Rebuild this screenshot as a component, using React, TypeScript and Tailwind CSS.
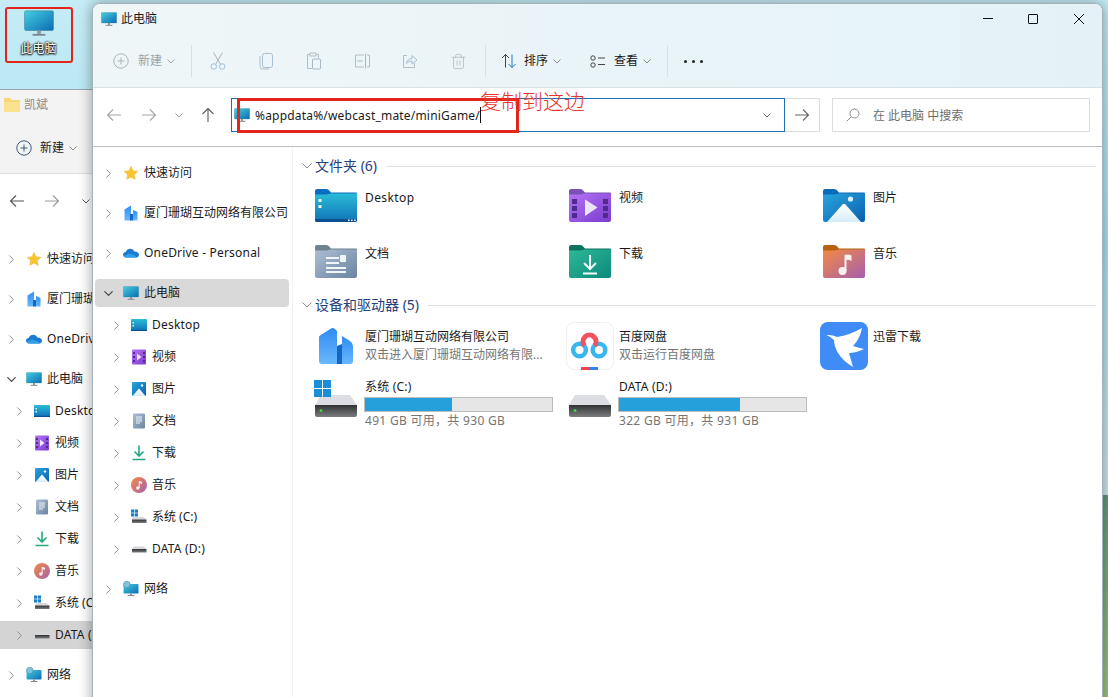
import React from "react";
import { Trash2, ChevronDown, ChevronRight } from "lucide-react";

const Defs = () => (
  <svg className="absolute w-0 h-0" aria-hidden="true">
    <defs>
      <linearGradient id="gMon" x1="0" y1="0" x2="1" y2="1"><stop offset="0" stopColor="#45cfe0" /><stop offset="1" stopColor="#0b6cb4" /></linearGradient>
      <linearGradient id="gDesk" x1="0" y1="0" x2="0" y2="1"><stop offset="0" stopColor="#2bbcd8" /><stop offset="1" stopColor="#0f72b6" /></linearGradient>
      <linearGradient id="gVid" x1="0" y1="0" x2="1" y2="1"><stop offset="0" stopColor="#b573f6" /><stop offset="1" stopColor="#7a3ccf" /></linearGradient>
      <linearGradient id="gPic" x1="0" y1="0" x2="1" y2="1"><stop offset="0" stopColor="#2aa6de" /><stop offset="1" stopColor="#0a5fae" /></linearGradient>
      <linearGradient id="gDoc" x1="0" y1="0" x2="1" y2="1"><stop offset="0" stopColor="#acbed4" /><stop offset="1" stopColor="#6b84a0" /></linearGradient>
      <linearGradient id="gDl" x1="0" y1="0" x2="1" y2="1"><stop offset="0" stopColor="#2fb996" /><stop offset="1" stopColor="#0b8a7c" /></linearGradient>
      <linearGradient id="gMus" x1="0" y1="0" x2="1" y2="1"><stop offset="0" stopColor="#f48a42" /><stop offset="1" stopColor="#a65fae" /></linearGradient>
      <linearGradient id="gMtn" x1="0" y1="0" x2="0" y2="1"><stop offset="0" stopColor="#ffffff" /><stop offset="1" stopColor="#d6ecf8" /></linearGradient>
      <linearGradient id="gDrv" x1="0" y1="0" x2="0" y2="1"><stop offset="0" stopColor="#2f3133" /><stop offset="1" stopColor="#7c7e80" /></linearGradient>
      <linearGradient id="gCo" x1="0" y1="0" x2="0" y2="1"><stop offset="0" stopColor="#2f8cf5" /><stop offset="1" stopColor="#6ab8fb" /></linearGradient>
    </defs>
  </svg>
);

const Monitor = ({ size = 16 }: { size?: number }) => (
  <svg width={size} height={size} viewBox="0 0 16 16" className="shrink-0">
    <rect x="0.3" y="1.5" width="15.4" height="10.5" rx="0.8" fill="url(#gMon)" stroke="#3d7f99" strokeWidth="0.3" />
    <rect x="7" y="12" width="2" height="2" fill="#8b98a0" />
    <rect x="4.6" y="13.8" width="6.8" height="1" fill="#7d8a92" />
  </svg>
);

type FolderKind = "desk" | "vid" | "pic" | "doc" | "dl" | "mus";
const folderStyle: Record<FolderKind, [string, string]> = {
  desk: ["#0a6cc0", "url(#gDesk)"],
  vid: ["#7a52b5", "url(#gVid)"],
  pic: ["#0a6cb8", "url(#gPic)"],
  doc: ["#6f8390", "url(#gDoc)"],
  dl: ["#0c7460", "url(#gDl)"],
  mus: ["#b8620f", "url(#gMus)"],
};

const Folder = ({ kind }: { kind: FolderKind }) => {
  const [tab, body] = folderStyle[kind];
  return (
    <svg width="42" height="33" viewBox="0 0 42 33" className="shrink-0">
      <path d="M2 0H11C13 0 14 1 16 3.6H41Q42 3.6 42 5V10H0V2Q0 0 2 0Z" fill={tab} />
      <path d="M0 5.5H12L15.5 4.4H42V31Q42 33 40 33H2Q0 33 0 31Z" fill={body} />
      {kind === "desk" && (
        <g fill="#eaf8fb">
          <rect x="3.5" y="10" width="3" height="3" />
          <rect x="3.5" y="16" width="3" height="3" />
          <path d="M0 30H42V31Q42 33 40 33H2Q0 33 0 31Z" fill="#0b4f92" />
          <rect x="33" y="30.5" width="1.6" height="1.6" />
          <rect x="36" y="30.5" width="1.6" height="1.6" />
          <rect x="39" y="30.5" width="1.6" height="1.6" />
        </g>
      )}
      {kind === "vid" && (
        <g>
          <g fill="#4f2a8f">
            <rect x="3" y="10" width="5" height="5" /><rect x="3" y="17" width="5" height="5" /><rect x="3" y="24" width="5" height="5" />
            <rect x="34" y="10" width="5" height="5" /><rect x="34" y="17" width="5" height="5" /><rect x="34" y="24" width="5" height="5" />
          </g>
          <path d="M16 10.500L28.500 18.500L16 27Z" fill="#ece6f8" />
        </g>
      )}
      {kind === "pic" && (
        <g>
          <circle cx="27.500" cy="10" r="2.600" fill="#e4f3fb" />
          <path d="M4 33L19.500 15.500Q21 14 22.500 15.500L38 33Z" fill="url(#gMtn)" />
        </g>
      )}
      {kind === "doc" && (
        <g fill="#f2f5f8">
          <rect x="11" y="12" width="13" height="2" />
          <rect x="11" y="17" width="13" height="2" />
          <rect x="11" y="22" width="20" height="2" />
          <rect x="11" y="26" width="20" height="2" />
          <rect x="25" y="10" width="6" height="7" rx="0.800" />
        </g>
      )}
      {kind === "dl" && (
        <path d="M21 10V23M15 18L21 24L27 18M14 28.500H28" fill="none" stroke="#f4fbf9" strokeWidth="2" />
      )}
      {kind === "mus" && (
        <g>
          <circle cx="19.500" cy="26" r="4" fill="#f8f1ee" />
          <path d="M21.500 26V10Q25 9 28.500 10.500V16Q25 14 23.500 15V26Z" fill="#f8f1ee" />
        </g>
      )}
    </svg>
  );
};

type NavKind = "star" | "co" | "cloud" | "pc" | "desk" | "vid" | "pic" | "doc" | "dl" | "mus" | "c" | "d" | "net";

const NavIcon = ({ kind }: { kind: NavKind }) => {
  switch (kind) {
    case "star":
      return <svg width="16" height="16" viewBox="0 0 16 16" className="shrink-0"><path d="M8 1.500L10 5.900L14.800 6.400L11.200 9.600L12.200 14.300L8 11.900L3.800 14.300L4.800 9.600L1.200 6.400L6 5.900Z" fill="#f7c62f" stroke="#eeb422" strokeWidth="0.600" /></svg>;
    case "co":
      return <svg width="16" height="16" viewBox="0 0 16 16" className="shrink-0"><path d="M1.500 4.500L8 0.500V15.500H1.500Z" fill="url(#gCo)" /><path d="M10 5L14.500 7V15.500H10Z" fill="url(#gCo)" /><rect x="7" y="9" width="3" height="6.500" fill="#1467c4" /></svg>;
    case "cloud":
      return <svg width="16" height="16" viewBox="0 0 16 16" className="shrink-0"><path d="M3.500 12.500C1.500 12.500 0 11.300 0 9.600C0 8 1.300 6.900 2.800 6.900C3.500 5 5.200 3.800 7.200 3.800C9 3.800 10.600 4.800 11.300 6.400C13.800 6.200 16 7.600 16 9.800C16 11.400 14.700 12.500 13 12.500Z" fill="#1c7ad0" /><path d="M3.500 12.500C2 12.500 1 12 0.500 11L6 8.500L11 10L14.500 12.200Q14 12.500 13 12.500Z" fill="#2f9fe8" /></svg>;
    case "pc":
      return <Monitor />;
    case "desk":
      return <svg width="16" height="16" viewBox="0 0 16 16" className="shrink-0"><rect x="0" y="2" width="16" height="12" rx="0.800" fill="url(#gDesk)" /><rect x="0" y="12.800" width="16" height="1.200" fill="#0b4f92" /><rect x="1.500" y="5" width="1.500" height="1.500" fill="#eaf8fb" /><rect x="1.500" y="8" width="1.500" height="1.500" fill="#eaf8fb" /></svg>;
    case "vid":
      return <svg width="16" height="16" viewBox="0 0 16 16" className="shrink-0"><rect x="1" y="0.500" width="14" height="15" rx="1" fill="url(#gVid)" /><g fill="#4f2a8f"><rect x="2" y="3" width="2" height="2" /><rect x="2" y="7" width="2" height="2" /><rect x="2" y="11" width="2" height="2" /><rect x="12" y="3" width="2" height="2" /><rect x="12" y="7" width="2" height="2" /><rect x="12" y="11" width="2" height="2" /></g><path d="M6 4.500L10.500 8L6 11.500Z" fill="#ece6f8" /></svg>;
    case "pic":
      return <svg width="16" height="16" viewBox="0 0 16 16" className="shrink-0"><rect x="1" y="1" width="14" height="14" rx="1" fill="url(#gPic)" /><circle cx="11" cy="4.500" r="1.200" fill="#e4f3fb" /><path d="M1.500 15L8 7.500L14.500 15Z" fill="url(#gMtn)" /></svg>;
    case "doc":
      return <svg width="16" height="16" viewBox="0 0 16 16" className="shrink-0"><rect x="2" y="0.500" width="12" height="15" rx="1" fill="url(#gDoc)" /><g fill="#eef2f6"><rect x="5" y="3.500" width="6" height="1" /><rect x="5" y="5.500" width="6" height="1" /><rect x="5" y="7.500" width="6" height="1" /><rect x="5" y="9.500" width="4" height="1" /></g></svg>;
    case "dl":
      return <svg width="16" height="16" viewBox="0 0 16 16" className="shrink-0"><path d="M8 0.500V11M3.500 6.500L8 11L12.500 6.500M1.500 14.500H14.500" fill="none" stroke="#24a983" strokeWidth="1.600" /></svg>;
    case "mus":
      return <svg width="16" height="16" viewBox="0 0 16 16" className="shrink-0"><circle cx="8" cy="8" r="8" fill="url(#gMus)" /><circle cx="6.800" cy="11" r="1.700" fill="#f8f1ee" /><path d="M7.700 11V4Q10 3.800 11 5V7Q9.500 6 8.700 6.300V11Z" fill="#f8f1ee" /></svg>;
    case "c":
      return <svg width="16" height="16" viewBox="0 0 16 16" className="shrink-0"><g fill="#1a7fc4"><rect x="0" y="0.500" width="3.200" height="3.200" /><rect x="3.800" y="0.500" width="3.200" height="3.200" /><rect x="0" y="4.300" width="3.200" height="3.200" /><rect x="3.800" y="4.300" width="3.200" height="3.200" /></g><path d="M2 8H12L15.500 10.500H1Z" fill="#d6d8dc" /><rect x="1" y="10.500" width="14.500" height="3.500" fill="url(#gDrv)" /></svg>;
    case "d":
      return <svg width="16" height="16" viewBox="0 0 16 16" className="shrink-0"><path d="M2.500 5.500H13L15.500 8H1Z" fill="#d6d8dc" /><rect x="1" y="8" width="14.500" height="3.500" fill="url(#gDrv)" /></svg>;
    case "net":
      return <svg width="16" height="16" viewBox="0 0 16 16" className="shrink-0"><rect x="0.500" y="3" width="15" height="9.500" rx="0.800" fill="url(#gMon)" /><rect x="7" y="12.500" width="2" height="1.700" fill="#8b98a0" /><rect x="4.600" y="14" width="6.800" height="1" fill="#7d8a92" /><circle cx="3.800" cy="3.500" r="3.300" fill="#7fc3dd" stroke="#3f7f9b" strokeWidth="0.500" /></svg>;
  }
};

const Row = ({ icon, label, pad, sub, selected, mb }: { icon: NavKind; label: string; pad: string; sub?: boolean; selected?: string; mb: string }) => (
  <div className={`flex items-center h-[28px] shrink-0 whitespace-nowrap ${mb} ${selected ?? ""}`}>
    <div className={`flex items-center ${pad} ${sub ? "ml-[8px]" : ""}`}>
      {label === "此电脑" ? (
        <ChevronDown size={15} strokeWidth={2} color="#4a4a4a" className="shrink-0 -ml-[2px] -mr-[3px]" />
      ) : (
        <ChevronRight size={15} strokeWidth={1.500} color="#8a8a8a" className="shrink-0 -ml-[2px] -mr-[3px]" />
      )}
      <span className="ml-[10px]"><NavIcon kind={icon} /></span>
      <span className={`ml-[5px] text-[12px] leading-[16px] text-[#1a1a1a] ${/^[A-Z]/.test(label) ? "tracking-[0.2px]" : ""}`}>{label}</span>
    </div>
  </div>
);

const NavTree = ({ pad, selectedRow }: { pad: string; selectedRow: "pc" | "d" }) => {
  const pcSel = selectedRow === "pc" ? "bg-[#d9d9d9] rounded-[4px]" : "";
  const dSel = selectedRow === "d" ? "bg-[#d4d4d4]" : "";
  return (
    <div className="flex flex-col">
      <Row icon="star" label="快速访问" pad={pad} mb="mb-[12px]" />
      <Row icon="co" label="厦门珊瑚互动网络有限公司" pad={pad} mb="mb-[12px]" />
      <Row icon="cloud" label="OneDrive - Personal" pad={pad} mb="mb-[12px]" />
      <Row icon="pc" label="此电脑" pad={pad} mb="mb-[4px]" selected={pcSel} />
      <Row icon="desk" label="Desktop" pad={pad} sub mb="mb-[4px]" />
      <Row icon="vid" label="视频" pad={pad} sub mb="mb-[4px]" />
      <Row icon="pic" label="图片" pad={pad} sub mb="mb-[4px]" />
      <Row icon="doc" label="文档" pad={pad} sub mb="mb-[4px]" />
      <Row icon="dl" label="下载" pad={pad} sub mb="mb-[4px]" />
      <Row icon="mus" label="音乐" pad={pad} sub mb="mb-[4px]" />
      <Row icon="c" label="系统 (C:)" pad={pad} sub mb="mb-[4px]" />
      <Row icon="d" label="DATA (D:)" pad={pad} sub mb="mb-[12px]" selected={dSel} />
      <Row icon="net" label="网络" pad={pad} mb="mb-[12px]" />
    </div>
  );
};

const Arrow = ({ dir, color }: { dir: "left" | "right" | "up"; color: string }) => {
  const d = dir === "left" ? "M15 8H1.500M7 2.500L1.500 8L7 13.500" : dir === "right" ? "M1 8H14.500M9 2.500L14.500 8L9 13.500" : "M8 15V1.500M2.500 7L8 1.500L13.500 7";
  return <svg width="16" height="16" viewBox="0 0 16 16" className="shrink-0"><path d={d} fill="none" stroke={color} strokeWidth="1.100" /></svg>;
};

const SmallChev = ({ color = "#8a8a8a" }: { color?: string }) => (
  <svg width="8" height="5" viewBox="0 0 8 5" className="shrink-0"><path d="M0.500 0.500L4 4L7.500 0.500" fill="none" stroke={color} strokeWidth="1" /></svg>
);

const PlusCircle = ({ color }: { color: string }) => (
  <svg width="16" height="16" viewBox="0 0 16 16" className="shrink-0"><circle cx="8" cy="8" r="7.200" fill="none" stroke={color} strokeWidth="1" /><path d="M8 4.500V11.500M4.500 8H11.500" stroke={color} strokeWidth="1" /></svg>
);

const Tool = ({ children }: { children: React.ReactNode }) => (
  <div className="w-[48px] flex items-center justify-center shrink-0">{children}</div>
);

const Sep = ({ cls }: { cls: string }) => <div className={`w-px h-[32px] bg-[#d8e0e3] shrink-0 ${cls}`} />;

const SectionHeader = ({ title }: { title: string }) => (
  <div className="flex items-center h-[20px]">
    <svg width="10" height="6" viewBox="0 0 10 6" className="shrink-0"><path d="M0.500 0.500L5 5L9.500 0.500" fill="none" stroke="#8a8a8a" strokeWidth="1" /></svg>
    <span className="ml-[3px] text-[14px] leading-[20px] text-[#23407f]">{title}</span>
    <div className="ml-[9px] flex-1 h-px bg-[#e2e2e2]" />
  </div>
);

const FolderItem = ({ kind, label }: { kind: FolderKind; label: string }) => (
  <div className="flex items-start pl-[10px]">
    <Folder kind={kind} />
    <span className={`ml-[8px] pt-px text-[12px] leading-[16px] text-[#1a1a1a] ${label === "Desktop" ? "tracking-[0.4px]" : ""}`}>{label}</span>
  </div>
);

const AppItem = ({ tile, name, desc }: { tile: React.ReactNode; name: string; desc?: string }) => (
  <div className="flex items-start pl-[7px]">
    <div className="w-[48px] h-[48px] shrink-0 flex items-center justify-center">{tile}</div>
    <div className="ml-[5px] pt-[7px] flex flex-col whitespace-nowrap">
      <span className="text-[12px] leading-[16px] text-[#1a1a1a]">{name}</span>
      {desc && <span className="mt-[2px] text-[12px] leading-[16px] text-[#757575]">{desc}</span>}
    </div>
  </div>
);

const DriveIcon = ({ win }: { win?: boolean }) => (
  <svg width="44" height="38" viewBox="0 0 44 38" className="shrink-0 -ml-[1px] mt-[2px]">
    <path d="M7 15H36L43 25H1Z" fill="#dcdde2" />
    <path d="M1 25H43V35Q43 37 41 37H3Q1 37 1 35Z" fill="url(#gDrv)" />
    <circle cx="7" cy="30.500" r="1.500" fill="#3fcf4a" />
    {win && (
      <g fill="#1a8ed8">
        <rect x="0" y="0" width="8" height="8" /><rect x="9" y="0" width="8" height="8" />
        <rect x="0" y="9" width="8" height="8" /><rect x="9" y="9" width="8" height="8" />
      </g>
    )}
  </svg>
);

const DriveItem = ({ name, used, info, win }: { name: string; used: number; info: string; win?: boolean }) => (
  <div className="flex items-start pl-[10px]">
    <DriveIcon win={win} />
    <div className="ml-[6px] flex flex-col w-[189px]">
      <span className="ml-px pt-px text-[12px] leading-[16px] text-[#1a1a1a] tracking-[0.2px]">{name}</span>
      <div className="mt-[2px] h-[15px] bg-[#e6e6e6] border border-[#bcbcbc]">
        <div className="h-full bg-[#26a0da]" style={{ width: `${used}%` }} />
      </div>
      <span className="ml-px mt-px text-[12px] leading-[16px] text-[#757575] whitespace-nowrap tracking-[0.3px]">{info}</span>
    </div>
  </div>
);

const BaiduTile = () => (
  <svg width="48" height="48" viewBox="0 0 48 48">
    <rect x="0.500" y="0.500" width="47" height="47" rx="8" fill="#fff" stroke="#efefef" />
    <circle cx="13.500" cy="28" r="6.300" fill="none" stroke="#3ab7f2" strokeWidth="4.500" />
    <circle cx="33" cy="28" r="6.300" fill="none" stroke="#3ab7f2" strokeWidth="4.500" />
    <path d="M18.500 23.700A6.500 6.500 0 1 1 28.500 23.700" fill="none" stroke="#f2545f" strokeWidth="5" />
    <rect x="15" y="45" width="8" height="3" fill="#ee4452" />
    <rect x="23" y="45" width="9" height="3" fill="#3a80f0" />
  </svg>
);

const XunleiTile = () => (
  <svg width="48" height="48" viewBox="0 0 48 48">
    <rect width="48" height="48" rx="8" fill="#3f8cf7" />
    <path d="M6.500 13Q12 12.500 17 15Q30 13 42 6Q40 17 33 24Q39 26 44 27Q36 31 29 31Q31 38 33 45Q23 39 18 31Q14 24 14 18Q11 15 6.500 13Z" fill="#fff" />
  </svg>
);

const CompanyIcon = () => (
  <svg width="34" height="36" viewBox="0 0 34 36">
    <path d="M0 9Q0 8 1 7.500L12 0.500Q14 -0.500 16 1L18 3V36H3Q0 36 0 33Z" fill="url(#gCo)" />
    <path d="M23 8L31 13Q34 15 34 18V33Q34 36 31 36H23Z" fill="url(#gCo)" />
    <path d="M18 18L23 16V36H18Z" fill="#1467c4" />
  </svg>
);

export default function App() {
  return (
    <div className="relative w-[1108px] h-[697px] overflow-hidden bg-[#cfe6ec] font-['Noto_Sans','Noto_Sans_CJK_SC',sans-serif]">
      <Defs />
      {/* desktop wallpaper */}
      <div className="flex flex-col h-full">
        <div className="h-[495px] bg-gradient-to-b from-[#c6ecf6] via-[#a6e2f2] to-[#cfe6ea]" />
        <div className="flex-1 bg-gradient-to-b from-[#5f9a7c] to-[#9cc47e]" />
      </div>

      {/* desktop icon */}
      <div className="absolute left-[5px] top-[7px] w-[67px] h-[55px] flex flex-col items-center">
        <div className="mt-[1px]"><Monitor size={30} /></div>
        <span className="mt-[3px] text-[12px] leading-[16px] text-white [text-shadow:0_0_2px_#000,0_0_2px_#000,0_1px_2px_#000]">此电脑</span>
      </div>

      {/* back window */}
      <div className="absolute left-0 top-[89px] w-[93px] h-[640px] overflow-hidden bg-white border-t border-[#9aa5a8] flex flex-col">
        <div className="h-[84px] bg-[#f3f3f3] border-b border-[#dedede] flex flex-col shrink-0">
          <div className="flex items-center pl-[4px] h-[30px] shrink-0">
            <svg width="16" height="14" viewBox="0 0 16 14" className="shrink-0"><path d="M0 1Q0 0 1 0H6L8 2H15Q16 2 16 3V13Q16 14 15 14H1Q0 14 0 13Z" fill="#f8d775" /><path d="M0 4H16V13Q16 14 15 14H1Q0 14 0 13Z" fill="#fbe28f" /></svg>
            <span className="ml-[4px] text-[12px] leading-[16px] text-[#8a8a8a]">凯斌</span>
          </div>
          <div className="flex items-center pl-[16px] mt-[20px]">
            <PlusCircle color="#3a5a80" />
            <span className="ml-[8px] text-[12px] leading-[16px] text-[#1a1a1a]">新建</span>
            <span className="ml-[5px]"><SmallChev /></span>
          </div>
        </div>
        <div className="h-[56px] flex items-center pl-[9px] shrink-0 -mt-[1px]">
          <Arrow dir="left" color="#555" />
          <span className="ml-[19px]"><Arrow dir="right" color="#9a9a9a" /></span>
          <span className="ml-[22px]"><SmallChev color="#555" /></span>
        </div>
        <div className="w-[93px] mt-[16px]"><NavTree pad="pl-[6px]" selectedRow="d" /></div>
      </div>

      {/* front window */}
      <div className="absolute left-[92px] top-[3px] w-[1011px] h-[720px] bg-white border border-[#a3b3b8] rounded-t-[8px] shadow-[0_0_14px_rgba(0,0,0,0.38)] flex flex-col">
        {/* title + toolbar */}
        <div className="h-[84px] shrink-0 rounded-t-[7px] bg-gradient-to-r from-[#eff6f8] to-[#e4f2f8] border-b border-[#d9e1e4] flex flex-col">
          <div className="h-[29px] flex items-center shrink-0 pl-[8px]">
            <Monitor />
            <span className="ml-[4px] text-[12px] leading-[16px] text-[#1a1a1a]">此电脑</span>
            <div className="ml-auto flex items-center">
              <span className="w-[44px] flex justify-center shrink-0"><div className="w-[10px] h-px bg-[#111]" /></span>
              <span className="w-[46px] flex justify-center shrink-0"><div className="w-[10px] h-[10px] border border-[#111] rounded-[1px]" /></span>
              <span className="w-[46px] flex justify-center shrink-0">
                <svg width="10" height="10" viewBox="0 0 10 10"><path d="M0 0L10 10M10 0L0 10" stroke="#111" strokeWidth="1" /></svg>
              </span>
            </div>
          </div>
          <div className="h-[54px] flex items-center pl-[20px] pt-[2px]">
            <PlusCircle color="#a9b4ba" />
            <span className="ml-[9px] text-[12px] leading-[16px] text-[#9aa3a8]">新建</span>
            <span className="ml-[5px]"><SmallChev color="#a0a8ac" /></span>
            <Sep cls="ml-[16px]" />
            <div className="flex ml-[2px]">
              <Tool>
                <svg width="16" height="18" viewBox="0 0 16 18"><path d="M12.500 0.500L5.500 12.500M3.500 0.500L10.500 12.500" fill="none" stroke="#a8b4bb" strokeWidth="1" /><circle cx="3.800" cy="14.500" r="2.800" fill="none" stroke="#9cc0da" strokeWidth="1" /><circle cx="12.200" cy="14.500" r="2.800" fill="none" stroke="#9cc0da" strokeWidth="1" /></svg>
              </Tool>
              <Tool>
                <svg width="14" height="17" viewBox="0 0 14 17"><rect x="3.500" y="0.500" width="10" height="14" rx="2" fill="none" stroke="#a5c0d4" strokeWidth="1" /><path d="M1 3V13.500Q1 16 3.500 16H10" fill="none" stroke="#b3bdc3" strokeWidth="1" /></svg>
              </Tool>
              <Tool>
                <svg width="16" height="18" viewBox="0 0 16 18"><path d="M3.500 2.500H1.500V16.500H6M10.500 2.500H12.500V6" fill="none" stroke="#b3bdc3" strokeWidth="1" /><rect x="4" y="1" width="6" height="3" fill="none" stroke="#b3bdc3" strokeWidth="1" /><rect x="6.500" y="7" width="8" height="10" rx="1" fill="none" stroke="#a5b8c6" strokeWidth="1" /></svg>
              </Tool>
              <Tool>
                <svg width="17" height="16" viewBox="0 0 17 16"><path d="M10 2H1.500V14H10M13 2H15.500V14H13" fill="none" stroke="#b3bdc3" strokeWidth="1" /><path d="M11.500 0.500V15.500M3.500 8H8.500" stroke="#a5b8c6" strokeWidth="1" /></svg>
              </Tool>
              <Tool>
                <svg width="16" height="16" viewBox="0 0 16 16"><path d="M5 2.500H1.500V14.500H12.500V10" fill="none" stroke="#b3bdc3" strokeWidth="1" /><path d="M4.500 10.500C5 7 7.500 5.500 10 5.500V2.500L15 7L10 11V8C8 8 6 8.500 4.500 10.500Z" fill="none" stroke="#a5c0d4" strokeWidth="1" /></svg>
              </Tool>
              <Tool><Trash2 size={17} strokeWidth={1} color="#aab4ba" /></Tool>
            </div>
            <Sep cls="ml-[3px]" />
            <svg width="16" height="16" viewBox="0 0 16 16" className="shrink-0 ml-[15px]"><path d="M4.500 14.500V1.500M1 5L4.500 1.500L8 5" fill="none" stroke="#444" strokeWidth="1" /><path d="M11 1.500V14.500M7.500 11L11 14.500L14.500 11" fill="none" stroke="#1f77c4" strokeWidth="1" /></svg>
            <span className="ml-[7px] text-[12px] leading-[16px] text-[#1a1a1a]">排序</span>
            <span className="ml-[5px]"><SmallChev /></span>
            <svg width="16" height="13" viewBox="0 0 16 13" className="shrink-0 ml-[29px]"><circle cx="3" cy="3" r="2.200" fill="none" stroke="#444" strokeWidth="1" /><circle cx="3" cy="10" r="2.200" fill="none" stroke="#444" strokeWidth="1" /><path d="M8 3H15M8 9.500H15" stroke="#444" strokeWidth="1" /></svg>
            <span className="ml-[8px] text-[12px] leading-[16px] text-[#1a1a1a]">查看</span>
            <span className="ml-[5px]"><SmallChev /></span>
            <Sep cls="ml-[16px]" />
            <div className="ml-[16px] flex gap-[5px]">
              <div className="w-[3px] h-[3px] rounded-full bg-[#222]" />
              <div className="w-[3px] h-[3px] rounded-full bg-[#222]" />
              <div className="w-[3px] h-[3px] rounded-full bg-[#222]" />
            </div>
          </div>
        </div>

        {/* address row */}
        <div className="h-[59px] shrink-0 border-b border-[#bdbdbd] flex items-start pt-[10px] pl-[13px]">
          <div className="h-[34px] flex items-center">
            <Arrow dir="left" color="#a6a6a6" />
            <span className="ml-[19px]"><Arrow dir="right" color="#a6a6a6" /></span>
            <span className="ml-[18px]"><SmallChev color="#9a9a9a" /></span>
            <span className="ml-[17px]"><Arrow dir="up" color="#5a5a5a" /></span>
          </div>
          <div className="ml-[15px] w-[554px] h-[34px] border border-[#1c6fb5] flex items-center pl-[2px] pr-[13px]">
            <Monitor />
            <span className="ml-[5px] pt-[2px] text-[12px] leading-[16px] text-[#1a1a1a] tracking-[0.19px]">%appdata%/webcast_mate/miniGame/</span>
            <div className="w-px h-[16px] bg-[#111] shrink-0" />
            <span className="ml-auto"><SmallChev color="#666" /></span>
          </div>
          <div className="w-[35px] h-[34px] border border-l-0 border-[#dcdcdc] flex items-center justify-center">
            <Arrow dir="right" color="#666" />
          </div>
          <div className="ml-[12px] w-[258px] h-[34px] border border-[#dcdcdc] flex items-center pl-[13px]">
            <svg width="14" height="14" viewBox="0 0 14 14" className="shrink-0"><circle cx="8.500" cy="5.500" r="4.500" fill="none" stroke="#8a8a8a" strokeWidth="1" /><path d="M5.200 8.800L0.800 13.200" stroke="#8a8a8a" strokeWidth="1" /></svg>
            <span className="ml-[13px] pt-px text-[12px] leading-[16px] text-[#6e6e6e] whitespace-pre">在 此电脑 中搜索</span>
          </div>
        </div>

        {/* body */}
        <div className="flex flex-1 min-h-0">
          <div className="w-[200px] shrink-0 border-r border-[#f2f2f2] pt-[12px] pl-[2px] pr-[3px]">
            <NavTree pad="pl-[8px]" selectedRow="pc" />
          </div>
          <div className="flex-1 pl-[9px] pr-[6px] pt-[9px] flex flex-col">
            <SectionHeader title="文件夹 (6)" />
            <div className="ml-[3px] mt-[13px] grid grid-cols-[254px_254px_254px] grid-rows-[56px_50px]">
              <FolderItem kind="desk" label="Desktop" />
              <FolderItem kind="vid" label="视频" />
              <FolderItem kind="pic" label="图片" />
              <FolderItem kind="doc" label="文档" />
              <FolderItem kind="dl" label="下载" />
              <FolderItem kind="mus" label="音乐" />
            </div>
            <SectionHeader title="设备和驱动器 (5)" />
            <div className="ml-[3px] mt-[7px] grid grid-cols-[254px_254px_254px] grid-rows-[56px_56px]">
              <AppItem tile={<CompanyIcon />} name="厦门珊瑚互动网络有限公司" desc="双击进入厦门珊瑚互动网络有限..." />
              <AppItem tile={<BaiduTile />} name="百度网盘" desc="双击运行百度网盘" />
              <AppItem tile={<XunleiTile />} name="迅雷下载" />
              <DriveItem name="系统 (C:)" used={46.500} info="491 GB 可用，共 930 GB" win />
              <DriveItem name="DATA (D:)" used={64.500} info="322 GB 可用，共 931 GB" />
            </div>
          </div>
        </div>
      </div>

      {/* red annotations */}
      <div className="absolute left-[5px] top-[7px] w-[68px] h-[56px] border-[2.500px] border-[#e1251b] rounded-[3px]" />
      <div className="absolute left-[237px] top-[98px] w-[282px] h-[35px] border-[3px] border-[#e3261b]" />
      <div className="absolute left-[480px] top-[87px] text-[21px] leading-[28px] font-light text-[#e8352c] whitespace-nowrap">复制到这边</div>
    </div>
  );
}
